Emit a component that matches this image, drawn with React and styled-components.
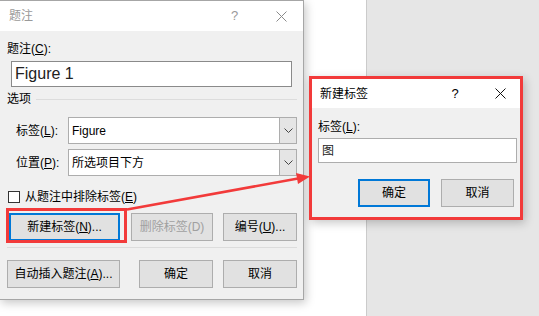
import React from "react";
import styled, { createGlobalStyle } from "styled-components";

const GlobalStyle = createGlobalStyle`
  html, body {
    margin: 0;
    padding: 0;
    overflow: hidden;
    background: #ffffff;
  }
  * {
    box-sizing: border-box;
  }
`;

const FONT = `"Liberation Sans", "Noto Sans CJK SC", sans-serif`;
const RED = "#f23a3a";

const Desk = styled.div`
  position: relative;
  width: 539px;
  height: 316px;
  display: flex;
  font-family: ${FONT};
  font-size: 12px;
  line-height: 16px;
  color: #000;
`;

const Page = styled.div`
  width: 367px;
  background: #ffffff;
  border-right: 1px solid #cbcbcb;
`;

const Side = styled.div`
  flex: 1;
  background: #e6e6e6;
`;

const Window = styled.div`
  position: absolute;
  left: ${(p) => p.$x}px;
  top: ${(p) => p.$y}px;
  width: ${(p) => p.$w}px;
  height: ${(p) => p.$h}px;
  display: flex;
  flex-direction: column;
  background: #f0f0f0;
  border: ${(p) => (p.$red ? `3px solid ${RED}` : "1px solid #a6a6a6")};
  box-shadow: 2px 3px 9px rgba(0, 0, 0, 0.22);
`;

const TitleBar = styled.div`
  height: ${(p) => p.$h}px;
  flex: none;
  display: flex;
  align-items: center;
  background: #ffffff;
  padding-left: ${(p) => p.$pad}px;
  color: ${(p) => (p.$inactive ? "#999999" : "#000000")};
`;

const TitleText = styled.span`
  flex: 1;
`;

const TitleButton = styled.div`
  width: ${(p) => p.$w}px;
  height: 100%;
  display: flex;
  align-items: center;
  justify-content: center;
  font-size: 13px;
`;

const Body = styled.div`
  flex: 1;
  display: flex;
  flex-direction: column;
  padding: ${(p) => p.$pad};
`;

const Label = styled.div`
  height: 16px;
  margin-top: ${(p) => p.$mt || 0}px;
`;

const TextBox = styled.div`
  height: ${(p) => p.$h}px;
  margin: ${(p) => p.$m};
  background: #ffffff;
  border: 1px solid ${(p) => p.$border || "#8a8a8a"};
  display: flex;
  align-items: center;
  padding-left: ${(p) => p.$pl}px;
  font-size: ${(p) => p.$fs}px;
  color: #222;
`;

const GroupHeader = styled.div`
  display: flex;
  align-items: center;
  height: 16px;
  margin-top: 4px;
  &::after {
    content: "";
    flex: 1;
    height: 1px;
    margin-left: 5px;
    background: #dcdcdc;
  }
`;

const FieldRow = styled.div`
  display: flex;
  align-items: center;
  margin-top: ${(p) => p.$mt}px;
  padding-left: 9px;
`;

const FieldLabel = styled.div`
  width: 52px;
`;

const Select = styled.div`
  flex: 1;
  height: 27px;
  display: flex;
  background: #ffffff;
  border: 1px solid #adadad;
`;

const SelectValue = styled.div`
  flex: 1;
  display: flex;
  align-items: center;
  padding-left: 3px;
`;

const DropButton = styled.div`
  width: 17px;
  display: flex;
  align-items: center;
  justify-content: center;
  background: #e5e5e5;
  border-left: 1px solid #adadad;
`;

const CheckRow = styled.div`
  display: flex;
  align-items: center;
  margin-top: 13px;
  padding-left: 1px;
  height: 16px;
`;

const CheckBox = styled.div`
  width: 12px;
  height: 12px;
  border: 1px solid #333;
  background: #fff;
  margin-right: 5px;
`;

const ButtonRow = styled.div`
  display: flex;
  margin-top: ${(p) => p.$mt}px;
`;

const Button = styled.div`
  width: ${(p) => p.$w}px;
  height: 28px;
  margin-left: ${(p) => p.$ml || 0}px;
  display: flex;
  align-items: center;
  justify-content: center;
  background: #e1e1e1;
  border: ${(p) => (p.$default ? "2px solid #0078d7" : "1px solid #adadad")};
  color: ${(p) => (p.$disabled ? "#a0a0a0" : "#000")};
`;

const Separator = styled.div`
  height: 1px;
  margin-top: 6px;
  background: #dcdcdc;
`;

const Highlight = styled.div`
  position: absolute;
  left: ${(p) => p.$x}px;
  top: ${(p) => p.$y}px;
  width: ${(p) => p.$w}px;
  height: ${(p) => p.$h}px;
  border: 3px solid ${RED};
`;

const Overlay = styled.svg`
  position: absolute;
  left: 0;
  top: 0;
  pointer-events: none;
`;

const CloseIcon = ({ color }) => (
  <svg width="11" height="11" viewBox="0 0 11 11">
    <path d="M0.5 0.5 L10.5 10.5 M10.5 0.5 L0.5 10.5" stroke={color} strokeWidth="1" fill="none" />
  </svg>
);

const Chevron = () => (
  <svg width="9" height="5" viewBox="0 0 9 5">
    <path d="M0.5 0.5 L4.5 4.5 L8.5 0.5" stroke="#444" strokeWidth="1" fill="none" />
  </svg>
);

const App = () => {
  return (
    <React.Fragment>
      <GlobalStyle />
      <Desk>
        <Page />
        <Side />

        {/* caption dialog */}
        <Window $x={-1} $y={0} $w={305} $h={300}>
          <TitleBar $h={30} $pad={9} $inactive>
            <TitleText>题注</TitleText>
            <TitleButton $w={49}>?</TitleButton>
            <TitleButton $w={44}>
              <CloseIcon color="#8a8a8a" />
            </TitleButton>
          </TitleBar>
          <Body $pad="10px 6px 0 7px">
            <Label>
              题注(<u>C</u>):
            </Label>
            <TextBox $h={26} $m="4px 5px 0 4px" $pl={3} $fs={16}>
              Figure 1
            </TextBox>
            <GroupHeader>选项</GroupHeader>
            <FieldRow $mt={10}>
              <FieldLabel>
                标签(<u>L</u>):
              </FieldLabel>
              <Select>
                <SelectValue>Figure</SelectValue>
                <DropButton>
                  <Chevron />
                </DropButton>
              </Select>
            </FieldRow>
            <FieldRow $mt={5}>
              <FieldLabel>
                位置(<u>P</u>):
              </FieldLabel>
              <Select>
                <SelectValue>所选项目下方</SelectValue>
                <DropButton>
                  <Chevron />
                </DropButton>
              </Select>
            </FieldRow>
            <CheckRow>
              <CheckBox />
              从题注中排除标签(<u>E</u>)
            </CheckRow>
            <ButtonRow $mt={8}>
              <Button $w={111} $ml={2} $default>
                新建标签(<u>N</u>)...
              </Button>
              <Button $w={82} $ml={11} $disabled>
                删除标签(D)
              </Button>
              <Button $w={74} $ml={10}>
                编号(<u>U</u>)...
              </Button>
            </ButtonRow>
            <Separator />
            <ButtonRow $mt={12}>
              <Button $w={113}>
                自动插入题注(<u>A</u>)...
              </Button>
              <Button $w={74} $ml={19}>
                确定
              </Button>
              <Button $w={74} $ml={10}>
                取消
              </Button>
            </ButtonRow>
          </Body>
        </Window>

        <Highlight $x={6} $y={208} $w={121} $h={35} />

        {/* new label dialog */}
        <Window $x={309} $y={76} $w={214} $h={144} $red>
          <TitleBar $h={29} $pad={8}>
            <TitleText>新建标签</TitleText>
            <TitleButton $w={50}>?</TitleButton>
            <TitleButton $w={40}>
              <CloseIcon color="#111" />
            </TitleButton>
          </TitleBar>
          <Body $pad="11px 3px 0 6px">
            <Label>
              标签(<u>L</u>):
            </Label>
            <TextBox $h={25} $m="3px 0 0 0" $pl={3} $fs={12} $border="#adadad">
              图
            </TextBox>
            <ButtonRow $mt={16}>
              <Button $w={72} $ml={40} $default>
                确定
              </Button>
              <Button $w={73} $ml={11}>
                取消
              </Button>
            </ButtonRow>
          </Body>
        </Window>

        <Overlay width="539" height="316" viewBox="0 0 539 316">
          <line x1="127" y1="209.5" x2="298" y2="178.5" stroke={RED} strokeWidth="2.5" />
          <polygon points="310,176.5 296,173 298,184" fill={RED} />
        </Overlay>
      </Desk>
    </React.Fragment>
  );
};

export default App;
